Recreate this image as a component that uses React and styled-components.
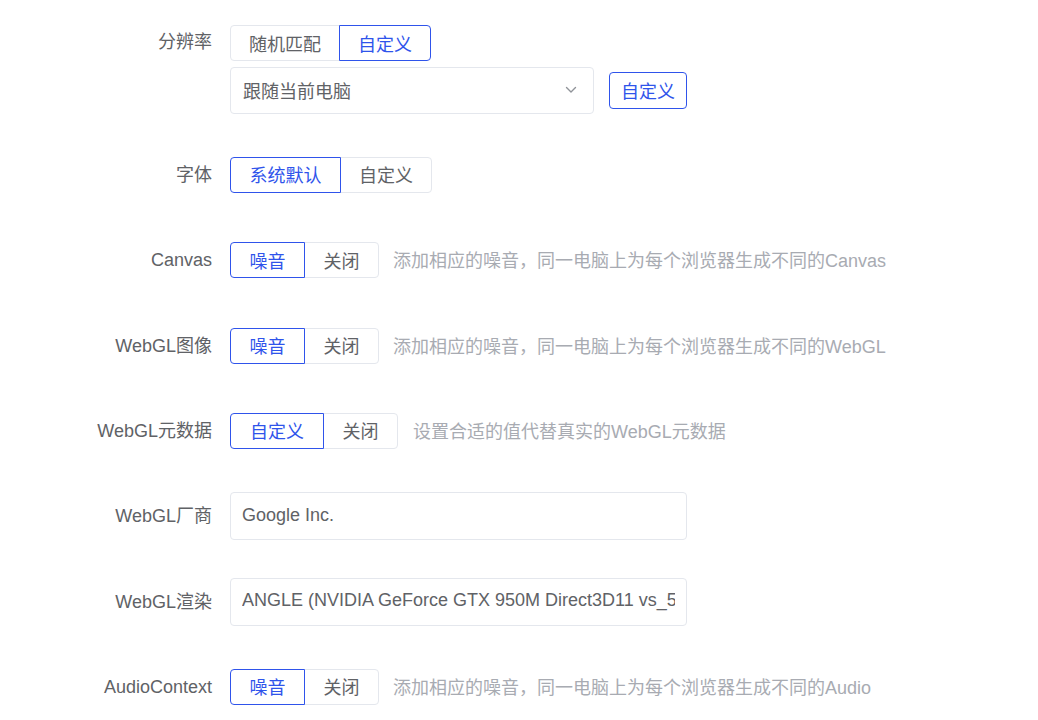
import React from "react";
import styled, { createGlobalStyle } from "styled-components";

const Global = createGlobalStyle`
  html, body { margin: 0; padding: 0; background: #fff; }
  body { font-family: "Liberation Sans", "Noto Sans CJK SC", sans-serif; }
`;

const BLUE = "#2f54eb";

const Page = styled.div`
  width: 1038px;
  height: 720px;
  overflow: hidden;
  background: #fff;
`;

const Row = styled.div`
  display: grid;
  grid-template-columns: 212px 1fr;
  column-gap: 18px;
  align-items: ${(p) => (p.$top ? "start" : "center")};
  height: ${(p) => p.$h || 85.33}px;
  box-sizing: border-box;
  padding-top: ${(p) => p.$pt || 0}px;
`;

const Label = styled.div`
  text-align: right;
  font-size: 18px;
  color: #606266;
  line-height: 34px;
  white-space: nowrap;
`;

const Control = styled.div`
  display: flex;
  flex-direction: ${(p) => (p.$column ? "column" : "row")};
  align-items: ${(p) => (p.$column ? "flex-start" : "center")};
  gap: ${(p) => p.$gap || 0}px;
`;

const Group = styled.div`
  display: flex;
  height: 36px;
`;

const Seg = styled.button`
  font-family: inherit;
  font-size: 18px;
  height: 36px;
  padding: 0 ${(p) => p.$px || 18.5}px 1px;
  background: #fff;
  color: ${(p) => (p.$active ? BLUE : "#606266")};
  border: 1px solid ${(p) => (p.$active ? BLUE : "#e4e7ed")};
  margin-left: -1px;
  position: relative;
  z-index: ${(p) => (p.$active ? 1 : 0)};
  cursor: pointer;
  white-space: nowrap;
  &:first-child {
    margin-left: 0;
    border-radius: 4px 0 0 4px;
  }
  &:last-child {
    border-radius: 0 4px 4px 0;
  }
`;

const Hint = styled.span`
  font-size: 18px;
  color: #a8abb2;
  margin-left: ${(p) => p.$ml || 14}px;
  margin-bottom: 2px;
  white-space: nowrap;
`;

const SelectBox = styled.div`
  width: 364px;
  height: 47px;
  box-sizing: border-box;
  border: 1px solid #e4e7ed;
  border-radius: 4px;
  display: flex;
  align-items: center;
  justify-content: space-between;
  padding: 0 16px 2px 12px;
  font-size: 18px;
  color: #606266;
`;

const SelectLine = styled.div`
  display: flex;
  align-items: center;
  gap: 15px;
`;

const SmallBtn = styled.button`
  font-family: inherit;
  font-size: 18px;
  height: 37px;
  padding: 0 11px 2px;
  background: #fff;
  color: ${BLUE};
  border: 1px solid ${BLUE};
  border-radius: 4px;
  cursor: pointer;
`;

const TextInput = styled.input`
  width: 457px;
  height: 48px;
  box-sizing: border-box;
  border: 1px solid #e4e7ed;
  border-radius: 4px;
  padding: 0 11px 2px;
  font-family: inherit;
  font-size: 18px;
  color: #606266;
  outline: none;
`;

const Chevron = () => (
  <svg width="12" height="8" viewBox="0 0 12 8" fill="none">
    <path d="M1.5 1.5 L6 6 L10.5 1.5" stroke="#909399" strokeWidth="1.4" strokeLinecap="round" strokeLinejoin="round" />
  </svg>
);

const NOISE = "添加相应的噪音，同一电脑上为每个浏览器生成不同的";

export default function App() {
  return (
    <Page>
      <Global />
      <Row $top $h={132.33} $pt={25}>
        <Label>分辨率</Label>
        <Control $column $gap={6}>
          <Group>
            <Seg $px={18}>随机匹配</Seg>
            <Seg $px={18} $active>自定义</Seg>
          </Group>
          <SelectLine>
            <SelectBox>
              <span>跟随当前电脑</span>
              <Chevron />
            </SelectBox>
            <SmallBtn>自定义</SmallBtn>
          </SelectLine>
        </Control>
      </Row>
      <Row>
        <Label>字体</Label>
        <Control>
          <Group>
            <Seg $px={18.5} $active>系统默认</Seg>
            <Seg $px={18}>自定义</Seg>
          </Group>
        </Control>
      </Row>
      <Row>
        <Label>Canvas</Label>
        <Control>
          <Group>
            <Seg $active>噪音</Seg>
            <Seg>关闭</Seg>
          </Group>
          <Hint>{NOISE}Canvas</Hint>
        </Control>
      </Row>
      <Row>
        <Label>WebGL图像</Label>
        <Control>
          <Group>
            <Seg $active>噪音</Seg>
            <Seg>关闭</Seg>
          </Group>
          <Hint>{NOISE}WebGL</Hint>
        </Control>
      </Row>
      <Row>
        <Label>WebGL元数据</Label>
        <Control>
          <Group>
            <Seg $px={19} $active>自定义</Seg>
            <Seg>关闭</Seg>
          </Group>
          <Hint $ml={15}>设置合适的值代替真实的WebGL元数据</Hint>
        </Control>
      </Row>
      <Row>
        <Label>WebGL厂商</Label>
        <Control>
          <TextInput defaultValue="Google Inc." />
        </Control>
      </Row>
      <Row>
        <Label>WebGL渲染</Label>
        <Control>
          <TextInput defaultValue="ANGLE (NVIDIA GeForce GTX 950M Direct3D11 vs_5_0 ps_5_0)" />
        </Control>
      </Row>
      <Row>
        <Label>AudioContext</Label>
        <Control>
          <Group>
            <Seg $active>噪音</Seg>
            <Seg>关闭</Seg>
          </Group>
          <Hint>{NOISE}Audio</Hint>
        </Control>
      </Row>
    </Page>
  );
}
